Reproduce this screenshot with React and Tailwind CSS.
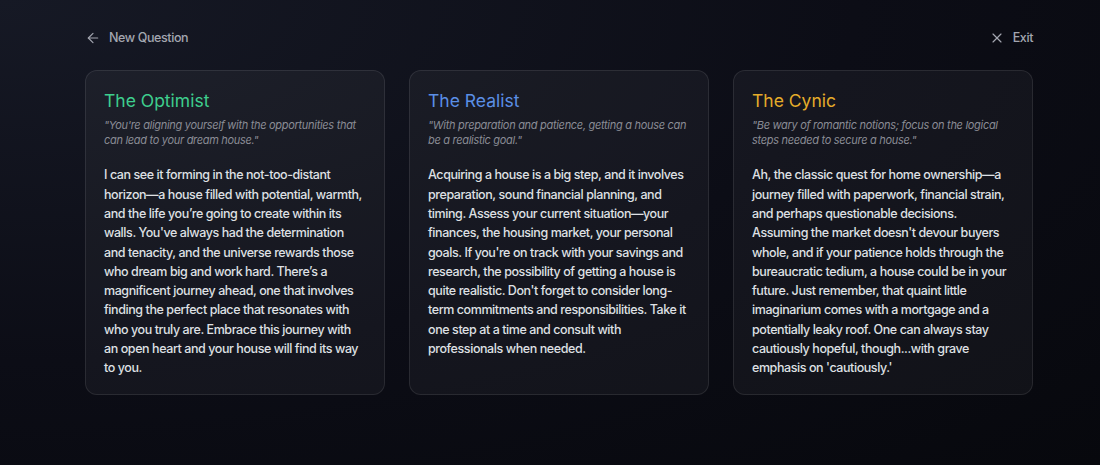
import React from 'react';
import { ArrowLeft, X } from 'lucide-react';

const voices = [
    {
        name: 'The Optimist',
        color: 'text-[#3ecf8e]',
        quote: '"You\'re aligning yourself with the opportunities that can lead to your dream house."',
        body: "I can see it forming in the not-too-distant horizon—a house filled with potential, warmth, and the life you’re going to create within its walls. You've always had the determination and tenacity, and the universe rewards those who dream big and work hard. There’s a magnificent journey ahead, one that involves finding the perfect place that resonates with who you truly are. Embrace this journey with an open heart and your house will find its way to you.",
    },
    {
        name: 'The Realist',
        color: 'text-[#5b8fe6]',
        quote: '"With preparation and patience, getting a house can be a realistic goal."',
        body: "Acquiring a house is a big step, and it involves preparation, sound financial planning, and timing. Assess your current situation—your finances, the housing market, your personal goals. If you're on track with your savings and research, the possibility of getting a house is quite realistic. Don't forget to consider long-term commitments and responsibilities. Take it one step at a time and consult with professionals when needed.",
    },
    {
        name: 'The Cynic',
        color: 'text-[#e5ac2a]',
        quote: '"Be wary of romantic notions; focus on the logical steps needed to secure a house."',
        body: "Ah, the classic quest for home ownership—a journey filled with paperwork, financial strain, and perhaps questionable decisions. Assuming the market doesn't devour buyers whole, and if your patience holds through the bureaucratic tedium, a house could be in your future. Just remember, that quaint little imaginarium comes with a mortgage and a potentially leaky roof. One can always stay cautiously hopeful, though...with grave emphasis on 'cautiously.'",
    },
];

function VoiceCard({ voice }) {
    return (
        <div className="flex flex-col rounded-xl border border-white/[0.09] bg-white/[0.04] px-[18px] pt-4 pb-4">
            <h2 className={`text-[17.5px] leading-[28px] font-normal ${voice.color}`}>{voice.name}</h2>
            <p className="mt-[3px] text-[11px] leading-[14.7px] italic tracking-[-0.3px] text-[#8a8c95]">{voice.quote}</p>
            <p className="mt-[18px] text-[12.5px] leading-[19.3px] font-medium tracking-[-0.42px] text-[#dfe0e4]">{voice.body}</p>
        </div>
    );
}

export default function App() {
    return (
        <div
            className="min-h-screen w-full bg-[radial-gradient(ellipse_at_top_left,#161925_0%,#0c0d16_55%,#07080d_100%)]"
            style={{ fontFamily: 'Inter, "Noto Sans", sans-serif' }}
        >
            <div className="ml-[85px] w-[948px] pt-[28px]">
                <div className="flex items-center justify-between h-5">
                    <button className="flex items-center gap-2 text-[12.5px] font-medium tracking-[-0.4px] text-[#a3a6b0]">
                        <ArrowLeft size={16} strokeWidth={1.75} />
                        <span>New Question</span>
                    </button>
                    <button className="flex items-center gap-2 text-[12.5px] font-medium tracking-[-0.4px] text-[#a3a6b0]">
                        <X size={16} strokeWidth={1.75} />
                        <span>Exit</span>
                    </button>
                </div>
                <div className="mt-[22px] grid grid-cols-3 gap-6">
                    {voices.map((v) => (
                        <VoiceCard key={v.name} voice={v} />
                    ))}
                </div>
            </div>
        </div>
    );
}
